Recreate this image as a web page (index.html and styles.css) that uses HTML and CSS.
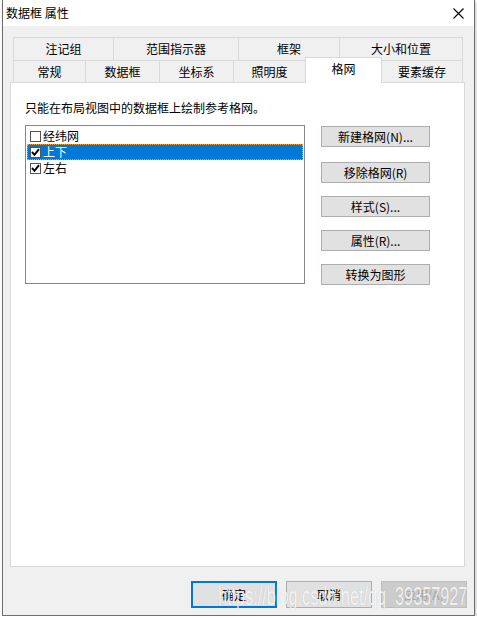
FILE: index.html
```html
<!DOCTYPE html>
<html lang="zh-CN">
<head>
  <meta charset="UTF-8" />
  <title>数据框 属性</title>
  <link rel="stylesheet" href="styles.css">
</head>
<body>
  <div class="window">
    <div class="titlebar">
      <span class="title">数据框 属性</span>
      <svg class="close" width="11" height="11" viewBox="0 0 11 11">
        <path d="M0.5 0.5 L10.5 10.5 M10.5 0.5 L0.5 10.5" stroke="#000" stroke-width="1.1" fill="none"/>
      </svg>
    </div>

    <div class="dialog-body">
      <div class="tabctl">
        <!-- back row of tabs -->
        <div class="tab-row">
          <div class="tab" style="width:100px">注记组</div>
          <div class="tab" style="width:125px">范围指示器</div>
          <div class="tab" style="width:101px">框架</div>
          <div class="tab last" style="width:124px">大小和位置</div>
        </div>
        <!-- front row of tabs -->
        <div class="tab-row">
          <div class="tab" style="width:72px">常规</div>
          <div class="tab" style="width:74px">数据框</div>
          <div class="tab" style="width:74px">坐标系</div>
          <div class="tab" style="width:72px">照明度</div>
          <div class="tab active" style="width:77px">格网</div>
          <div class="tab last after-active" style="width:82px">要素缓存</div>
        </div>

        <div class="panel">
          <p class="hint">只能在布局视图中的数据框上绘制参考格网。</p>
          <div class="grid-area">
            <div class="listbox">
              <div class="item">
                <span class="check"></span>经纬网
              </div>
              <div class="item selected">
                <span class="check">
                  <svg width="9" height="9" viewBox="0 0 9 9"><path d="M1 4 L3.5 6.8 L8 1.2" stroke="#000" stroke-width="2" fill="none"/></svg>
                </span>上下
              </div>
              <div class="item">
                <span class="check">
                  <svg width="9" height="9" viewBox="0 0 9 9"><path d="M1 4 L3.5 6.8 L8 1.2" stroke="#000" stroke-width="2" fill="none"/></svg>
                </span>左右
              </div>
            </div>

            <div class="side-btns">
              <button class="btn first">新建格网(N)...</button>
              <button class="btn">移除格网(R)</button>
              <button class="btn">样式(S)...</button>
              <button class="btn">属性(R)...</button>
              <button class="btn">转换为图形</button>
            </div>
          </div>
        </div>
      </div>

      <div class="footer">
        <button class="btn big default">确定</button>
        <button class="btn big">取消</button>
        <button class="btn big disabled">应用(A)</button>
      </div>
    </div>

    <div class="watermark">https://blog.csdn.net/qq_39357927</div>
  </div>
</body>
</html>
```

FILE: styles.css
```css
:root {
  --face: #f0f0f0;
  --tab-line: #d9d9d9;
  --btn-bg: #e1e1e1;
  --btn-line: #adadad;
  --accent: #0078d7;
}

body {
  margin: 0;
  background: #fff;
  font-family: "Noto Sans CJK SC", "Noto Sans", sans-serif;
  font-size: 12px;
  color: #000;
}

.window {
  position: relative;
  margin-left: 2px;
  width: 473px;
  box-sizing: border-box;
  background: var(--face);
  border-left: 1px solid #6f6f6f;
  border-right: 1px solid #6f6f6f;
  border-bottom: 1px solid #6f6f6f;
  box-shadow: 1px 2px 3px rgba(0,0,0,0.25);
}

.titlebar {
  height: 26px;
  background: #fff;
  display: flex;
  align-items: center;
  justify-content: space-between;
  padding: 0 10px 0 3px;
}

.title {
  line-height: 16px;
}

.close {
  margin-top: 1px;
}

.dialog-body {
  padding-top: 11px;
}

.tabctl {
  margin-left: 7px;
  width: 455px;
}

.tab-row {
  display: flex;
  padding-left: 3px;
}

.tab-row:first-child .tab {
  height: 23px;
}

.tab {
  box-sizing: border-box;
  height: 22px;
  border-top: 1px solid var(--tab-line);
  border-left: 1px solid var(--tab-line);
  display: flex;
  align-items: center;
  justify-content: center;
  line-height: 16px;
  background: var(--face);
}

.tab.last {
  border-right: 1px solid var(--tab-line);
}

.tab.active {
  position: relative;
  z-index: 1;
  height: 26px;
  margin-top: -3px;
  margin-bottom: -1px;
  padding-bottom: 3px;
  background: #fff;
  border-right: 1px solid var(--tab-line);
}

.tab.after-active {
  margin-left: -1px;
}

.panel {
  box-sizing: border-box;
  height: 485px;
  background: #fff;
  border: 1px solid var(--tab-line);
  padding: 17px 14px 0;
}

.hint {
  margin: 0;
  line-height: 16px;
}

.grid-area {
  display: flex;
  align-items: flex-start;
  margin-top: 9px;
}

.listbox {
  box-sizing: border-box;
  width: 280px;
  height: 159px;
  border: 1px solid #828790;
  padding: 2px 1px 0;
}

.item {
  box-sizing: border-box;
  height: 16px;
  display: flex;
  align-items: center;
  padding-left: 3px;
  line-height: 16px;
}

.item.selected {
  background: var(--accent);
  color: #fff;
  outline: 1px dotted #f3a33a;
  outline-offset: -1px;
}

.check {
  box-sizing: border-box;
  width: 11px;
  height: 11px;
  margin-right: 2px;
  border: 1px solid #555;
  background: #fff;
  display: flex;
  align-items: center;
  justify-content: center;
}

.side-btns {
  display: flex;
  flex-direction: column;
  gap: 13px;
  margin-left: 16px;
  margin-top: 1px;
}

.btn {
  box-sizing: border-box;
  width: 109px;
  height: 21px;
  padding: 0;
  background: var(--btn-bg);
  border: 1px solid var(--btn-line);
  font-family: inherit;
  font-size: 12px;
  line-height: 16px;
  color: #000;
}

.btn.first {
  margin-bottom: 2px;
}

.footer {
  display: flex;
  justify-content: flex-end;
  gap: 9px;
  padding: 14px 7px 7px 0;
}

.btn.big {
  width: 86px;
  height: 27px;
}

.btn.default {
  border: 2px solid var(--accent);
}

.btn.disabled {
  background: #cccccc;
  border-color: #bfbfbf;
  color: #a3a3a3;
}

/* csdn watermark lying over the footer buttons */
.watermark {
  position: absolute;
  left: 215px;
  top: 582px;
  font-family: "Liberation Sans", Arial, sans-serif;
  font-size: 25px;
  line-height: 28px;
  white-space: nowrap;
  color: rgba(255,255,255,0.85);
  text-shadow: 0 0 1px rgba(0,0,0,0.2);
  transform: scaleX(0.65);
  transform-origin: left top;
  pointer-events: none;
}
```
